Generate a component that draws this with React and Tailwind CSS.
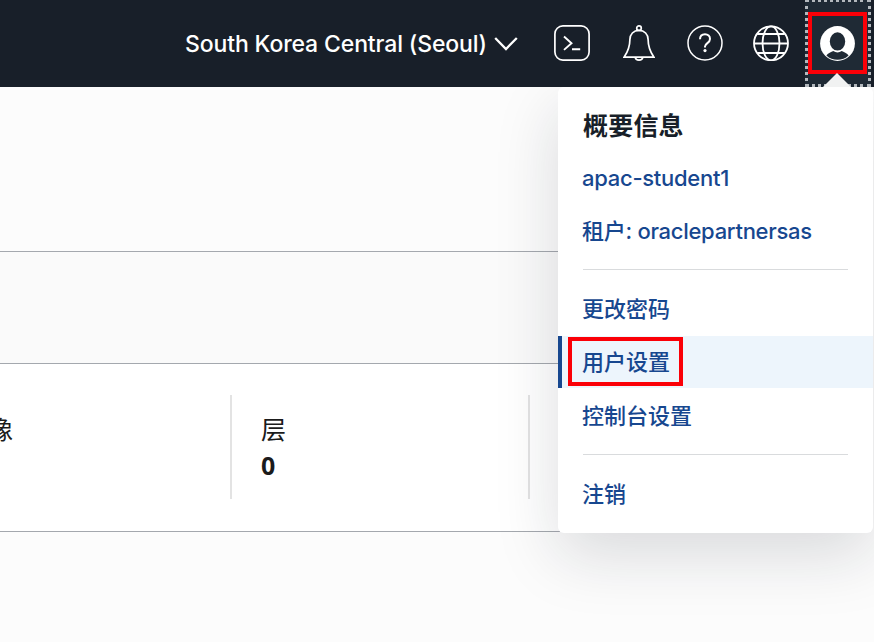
import React from 'react';

function TerminalIcon() {
  return (
    <svg width="36" height="36" viewBox="0 0 36 36" fill="none" stroke="white" strokeWidth="1.7" className="shrink-0">
      <rect x="0.9" y="0.9" width="34.2" height="34.2" rx="8" />
      <path d="M10 11.5l7.5 6.7-7.5 6.7M18 24.3h8.2" strokeWidth="1.9" />
    </svg>
  );
}

function BellIcon() {
  return (
    <svg width="32" height="36" viewBox="0 0 32 36" fill="none" stroke="white" strokeWidth="1.7" className="shrink-0">
      <circle cx="16" cy="3.2" r="2.3" />
      <path d="M16 5.4C10.5 5.4 6.9 9.3 6.9 14.5C6.9 22 5 26.5 1.2 32.1H30.8C27 26.5 25.1 22 25.1 14.5C25.1 9.3 21.5 5.4 16 5.4Z" />
      <path d="M12.3 32.4c.3 3.6 7.1 3.6 7.4 0" />
    </svg>
  );
}

function HelpIcon() {
  return (
    <svg width="36" height="36" viewBox="0 0 36 36" fill="none" stroke="white" strokeWidth="1.5" className="shrink-0">
      <circle cx="18" cy="18" r="17" />
      <path d="M13 14.3c0-3.1 2.1-5 5-5s5 1.9 5 4.7c0 4.1-5 4-5 7.6v.9" strokeWidth="2" />
      <circle cx="18" cy="25.6" r="1.6" fill="white" stroke="none" />
    </svg>
  );
}

function GlobeIcon() {
  return (
    <svg width="36" height="36" viewBox="0 0 36 36" fill="none" stroke="white" strokeWidth="1.8" className="shrink-0">
      <circle cx="18" cy="18.3" r="17" />
      <ellipse cx="18" cy="18.3" rx="8.5" ry="17" />
      <path d="M1 18.5h34M4.2 9h27.6M4.2 28h27.6" />
    </svg>
  );
}

function AvatarIcon() {
  return (
    <svg width="35" height="35" viewBox="0 0 35 35" className="shrink-0">
      <circle cx="17.5" cy="17.5" r="17.4" fill="white" />
      <ellipse cx="17.5" cy="15.4" rx="7.7" ry="9.2" fill="#1f2a35" />
      <path d="M6.4 29.4c1.7-1.9 3.6-2.8 6.9-4.3 2.6 1.7 5.8 1.7 8.4 0 3.3 1.5 5.2 2.4 6.9 4.3a16.2 16.2 0 0 1-22.2 0Z" fill="#1f2a35" />
    </svg>
  );
}

function Header() {
  return (
    <header className="relative z-20 flex h-[87px] items-start bg-[#181f29] text-white">
      <div className="ml-[185px] flex h-[88px] w-[333px] items-center justify-between">
        <span className="whitespace-nowrap pt-px text-[23px] font-medium tracking-[-0.13px]">South Korea Central (Seoul)</span>
        <svg width="24" height="14" viewBox="0 0 24 14" fill="none" stroke="white" strokeWidth="2.3" className="shrink-0">
          <path d="M1.2 1l10.8 11L22.8 1" />
        </svg>
      </div>
      <div className="ml-9 flex h-[86px] items-center">
        <TerminalIcon />
        <div className="ml-[33px] flex"><BellIcon /></div>
        <div className="ml-8 flex"><HelpIcon /></div>
        <div className="ml-[30px] flex"><GlobeIcon /></div>
      </div>
      <div className="-mt-px ml-4 h-[88px] w-[66px] border-[3px] border-dotted border-[#b3b8bd] bg-[#1f2a35]">
        <div className="mt-[10px] flex h-[62px] w-[59px] items-center justify-center border-4 border-[#fb0007]">
          <AvatarIcon />
        </div>
      </div>
      <svg width="28" height="14" viewBox="0 0 28 14" className="absolute left-[823px] top-[73px]">
        <path d="M0 14L14 0l14 14Z" fill="#f1f2f2" />
      </svg>
    </header>
  );
}

function MenuItem({ children }) {
  return <a className="flex h-[53px] items-center pl-[24px]">{children}</a>;
}

function ProfileMenu() {
  return (
    <aside className="absolute left-[558px] top-[87px] z-10 h-[446px] w-[315px] rounded-md bg-white pt-[13px] text-[22px] font-medium tracking-[-0.28px] text-[#17478f] shadow-[0_22px_64px_rgba(22,30,40,0.15)]">
      <h2 className="flex h-[52px] items-center pl-[25px] pt-px text-[25px] font-bold tracking-[0.2px] text-[#181f29]">概要信息</h2>
      <MenuItem>apac-student1</MenuItem>
      <MenuItem>租户: oraclepartnersas</MenuItem>
      <hr className="mx-[25px] mt-[11px] border-[#d9dbdd]" />
      <div className="mt-[13px] tracking-normal">
        <MenuItem>更改密码</MenuItem>
        <a className="flex h-[52px] items-start border-l-4 border-[#17478f] bg-[#edf5fc] pl-[6px] pt-px">
          <span className="flex h-[49px] w-[115px] items-center border-4 border-[#fb0007] pl-[10px] pt-[2px]">用户设置</span>
        </a>
        <div className="mt-[2px]"><MenuItem>控制台设置</MenuItem></div>
      </div>
      <hr className="mx-[25px] mt-[11px] border-[#d9dbdd]" />
      <div className="mt-[13px] tracking-normal"><MenuItem>注销</MenuItem></div>
    </aside>
  );
}

export default function App() {
  return (
    <div className="relative h-[642px] w-[874px] overflow-hidden bg-[#fcfcfc] font-[Inter,'Noto_Sans_CJK_SC',sans-serif] text-[#1b1b1b]">
      <Header />
      <main className="w-[870px]">
        <div className="h-[165px] border-b border-[#a4a8ae]" />
        <div className="h-28 border-b border-[#a4a8ae] bg-[#fafafa]" />
        <section className="flex h-[168px] border-b border-[#a4a8ae] bg-white pt-[31px] text-[25px] leading-[36px]">
          <div className="flex h-[104px] w-[232px] border-r-2 border-[#e3e3e3] pt-[17px]">
            <span className="-ml-3">像</span>
          </div>
          <div className="h-[104px] w-[298px] border-r-2 border-[#e3e3e3] pl-[29px] pt-[17px]">
            <div>层</div>
            <div className="-mt-px font-[Open_Sans,sans-serif] text-[25px] font-bold">0</div>
          </div>
        </section>
      </main>
      <ProfileMenu />
    </div>
  );
}
